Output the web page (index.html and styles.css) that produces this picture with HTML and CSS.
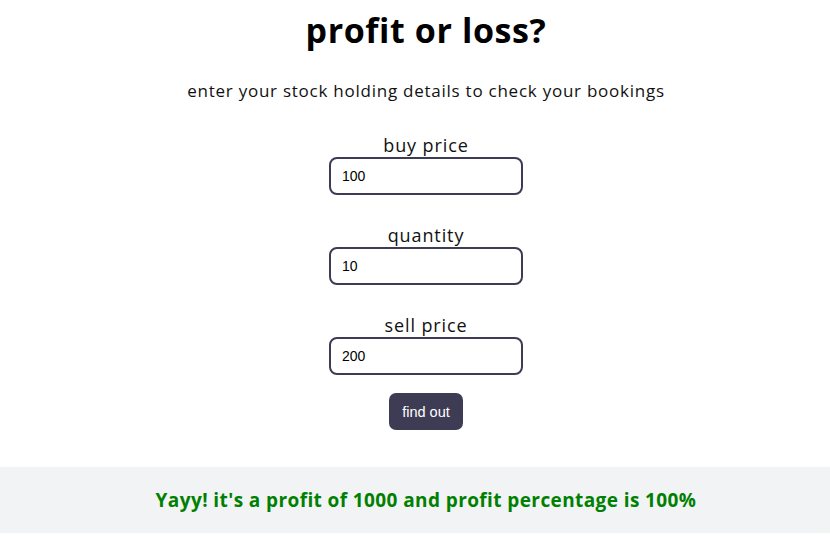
FILE: index.html
```html
<!DOCTYPE html>
<html lang="en">
<head>
<meta charset="utf-8">
<title>profit or loss?</title>
<link rel="stylesheet" href="styles.css">
</head>
<body>
<main class="app">
  <section class="main">
    <h1 class="title">profit or loss?</h1>
    <p class="subtitle">enter your stock holding details to check your bookings</p>
    <div class="form">
      <label class="field">
        <span class="field-label">buy price</span>
        <input class="field-input" type="number" value="100">
      </label>
      <label class="field">
        <span class="field-label">quantity</span>
        <input class="field-input" type="number" value="10">
      </label>
      <label class="field">
        <span class="field-label">sell price</span>
        <input class="field-input" type="number" value="200">
      </label>
      <button class="btn" type="button">find out</button>
    </div>
  </section>
  <div class="output">Yayy! it's a profit of 1000 and profit percentage is 100%</div>
</main>
</body>
</html>
```
FILE: styles.css
```css
html, body {
  margin: 0;
  padding: 0;
  background: #ffffff;
}

.app {
  font-family: "Open Sans", "DejaVu Sans", sans-serif;
  color: #111111;
  display: flex;
  flex-direction: column;
  text-align: center;
}

.main {
  display: flex;
  flex-direction: column;
  align-items: center;
  padding-left: 22px;
}

.title {
  font-size: 34px;
  font-weight: 700;
  letter-spacing: 0.6px;
  line-height: 40px;
  margin: 10px 0 0;
  color: #000000;
}

.subtitle {
  font-size: 17px;
  letter-spacing: 0.75px;
  line-height: 24px;
  margin: 29px 0 0;
}

.form {
  display: flex;
  flex-direction: column;
  align-items: center;
  margin-top: 30px;
  gap: 28px;
}

.field {
  display: flex;
  flex-direction: column;
  align-items: center;
}

.field-label {
  font-size: 18px;
  letter-spacing: 0.9px;
  line-height: 24px;
}

.field-input {
  box-sizing: border-box;
  width: 194px;
  height: 38px;
  border: 2px solid #3e3b55;
  border-radius: 8px;
  padding: 0 11px;
  font-family: "Liberation Sans", Arial, sans-serif;
  font-size: 14px;
  color: #000000;
  background: #ffffff;
  outline: none;
  -moz-appearance: textfield;
}

.field-input::-webkit-outer-spin-button,
.field-input::-webkit-inner-spin-button {
  -webkit-appearance: none;
  margin: 0;
}

.btn {
  margin-top: -10px;
  width: 74px;
  height: 37px;
  border: none;
  border-radius: 7px;
  background: #3e3b55;
  color: #ffffff;
  font-family: "Liberation Sans", Arial, sans-serif;
  font-size: 14.5px;
  cursor: pointer;
}

.output {
  margin-top: 37px;
  height: 66px;
  padding-left: 22px;
  display: flex;
  align-items: center;
  justify-content: center;
  background: #f2f3f5;
  color: #008000;
  font-size: 19px;
  letter-spacing: 0.4px;
  font-weight: 700;
}
```
